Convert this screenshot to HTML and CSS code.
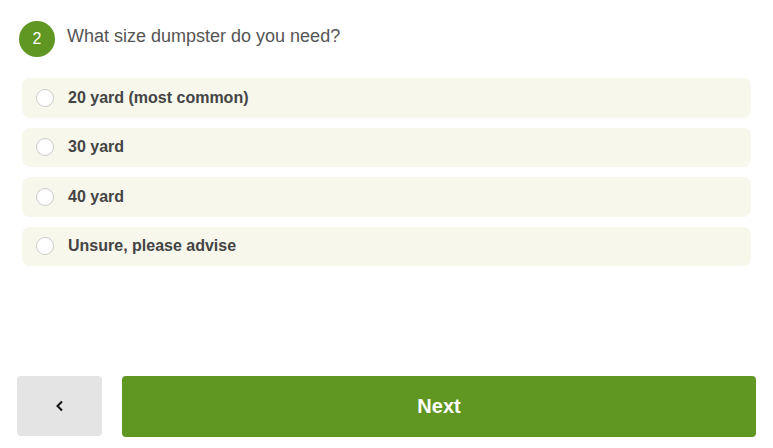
FILE: index.html
```html
<!DOCTYPE html>
<html lang="en">
<head>
  <meta charset="UTF-8" />
  <meta name="viewport" content="width=device-width, initial-scale=1" />
  <title>Dumpster Size</title>
  <link rel="stylesheet" href="styles.css">
</head>
<body>
  <form class="step" id="sizeForm">
    <div class="question">
      <span class="step-num">2</span>
      <span class="question-text">What size dumpster do you need?</span>
    </div>
    <div class="options">
      <label class="option"><input type="radio" name="size" value="20" /><span>20 yard (most common)</span></label>
      <label class="option"><input type="radio" name="size" value="30" /><span>30 yard</span></label>
      <label class="option"><input type="radio" name="size" value="40" /><span>40 yard</span></label>
      <label class="option"><input type="radio" name="size" value="unsure" /><span>Unsure, please advise</span></label>
    </div>
    <div class="nav">
      <button type="button" class="back" aria-label="Back">
        <svg width="10" height="12" viewBox="0 0 10 12"><path d="M7 1.5 L2.5 6 L7 10.5" fill="none" stroke="#111" stroke-width="2"/></svg>
      </button>
      <button type="submit" class="next">Next</button>
    </div>
  </form>
</body>
</html>
```

FILE: styles.css
```css
html, body { margin: 0; padding: 0; background: #fff; }
body { font-family: "Liberation Sans", Arial, sans-serif; }
.step { height: 448px; box-sizing: border-box; display: flex; flex-direction: column; padding: 21px 17px 11px 17px; }
.question { display: flex; align-items: center; gap: 12px; padding-left: 2px; }
.step-num { width: 36px; height: 36px; border-radius: 50%; background: #5f9722; color: #fff; font-size: 16px; display: flex; align-items: center; justify-content: center; }
.question-text { font-size: 18px; color: #555; margin-top: -6px; }
.options { display: flex; flex-direction: column; gap: 10px; margin: 21px 5px 0 5px; }
.option { display: flex; align-items: center; height: 39.5px; background: #f7f7ec; border-radius: 8px; padding-left: 14px; cursor: pointer; }
.option input { appearance: none; -webkit-appearance: none; margin: 0 14px 0 0; width: 18px; height: 18px; border: 1px solid #ccc; border-radius: 50%; background: #fff; box-sizing: border-box; }
.option span { font-size: 16px; font-weight: bold; color: #444; }
.nav { margin-top: auto; display: flex; gap: 20px; }
.back { width: 85px; height: 60px; border: none; border-radius: 4px; background: #e4e4e4; display: flex; align-items: center; justify-content: center; padding: 0; }
.next { flex: 1; height: 61px; border: none; border-radius: 4px; background: #5f9722; color: #fff; font-family: inherit; font-size: 20px; font-weight: bold; }
```
